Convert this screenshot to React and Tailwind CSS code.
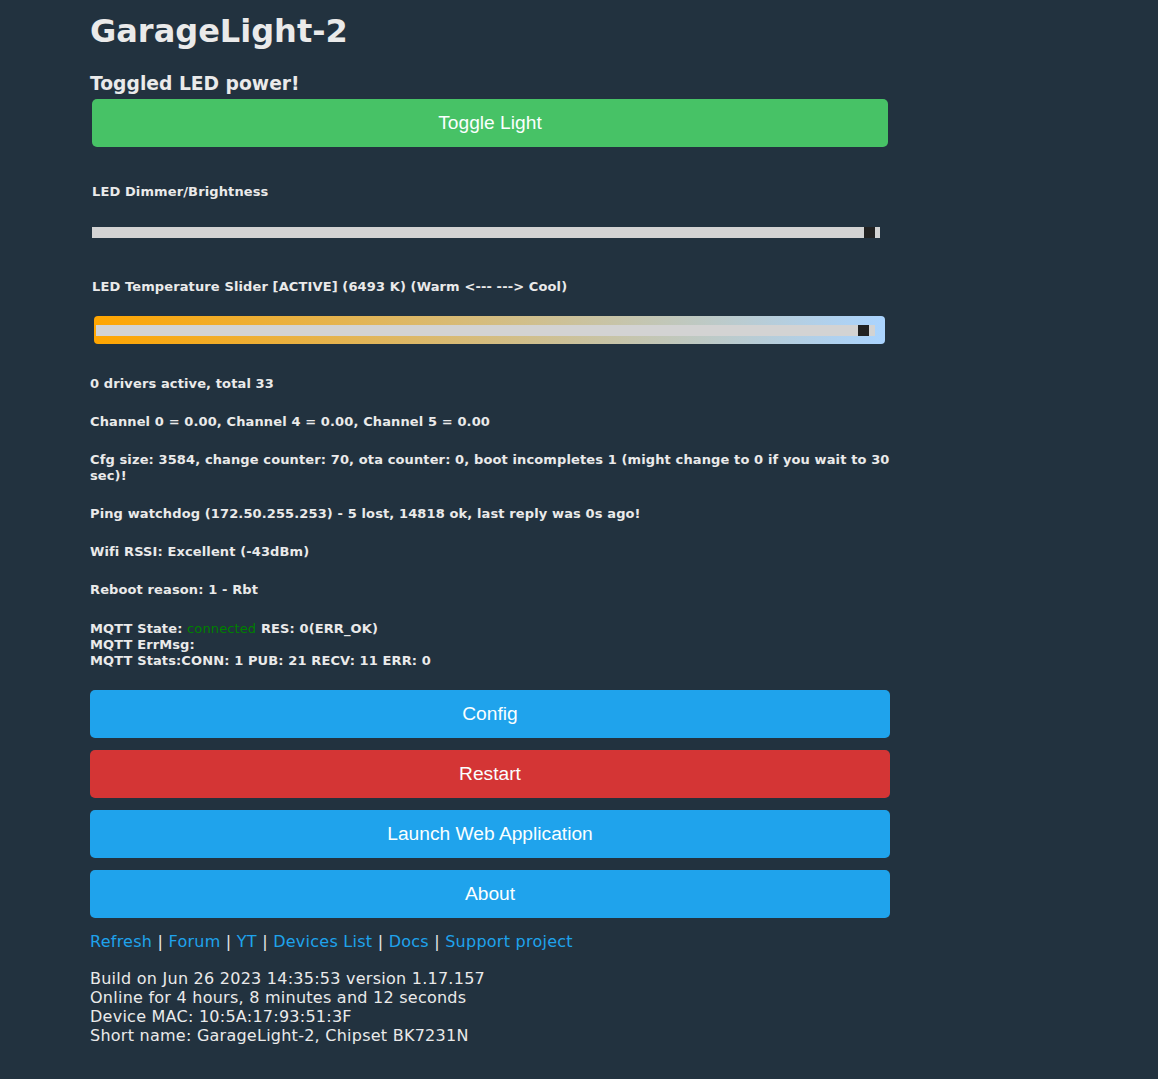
import React from "react";

const bold13 = "text-[13px] font-bold leading-[16px] tracking-[0.12px]";

function Btn({ color, children, className = "" }) {
  return (
    <div
      className={`h-12 rounded-[5px] flex items-center justify-center text-[19.2px] text-[#faffff] font-['Liberation_Sans',Arial,sans-serif] ${color} ${className}`}
    >
      {children}
    </div>
  );
}

export default function App() {
  return (
    <div className="min-h-[1079px] bg-[#22323f] text-[#eaeaea] font-['Verdana','DejaVu_Sans',sans-serif]">
      <div className="w-[800px] ml-[90px] pt-[12px] pb-[20px]">
        <h1 className="text-[32px] font-bold leading-[38px]">GarageLight-2</h1>
        <h3 className="mt-[23px] text-[18.72px] font-bold leading-[22px]">Toggled LED power!</h3>
        <div className="px-[2px] mt-[4px]">
          <Btn color="bg-[#47c266]">Toggle Light</Btn>

          <div className={`${bold13} mt-[37px]`}>LED Dimmer/Brightness</div>
          <div className="mt-[27px] mr-[8px] h-[11px] bg-[#d3d3d3] flex justify-end pr-[5px]">
            <div className="w-[11px] h-full bg-[#222]" />
          </div>

          <div className={`${bold13} mt-[41px]`}>
            LED Temperature Slider [ACTIVE] (6493 K) (Warm &lt;--- ---&gt; Cool)
          </div>
          <div className="mt-[21px] ml-[2px] mr-[3px] h-[28px] rounded-[4px] bg-[linear-gradient(to_right,#ffa500,#aad4ff)] px-[2px] flex items-center">
            <div className="flex-1 mr-[8px] h-[11px] bg-[#d3d3d3] flex justify-end pr-[6px]">
              <div className="w-[11px] h-full bg-[#222]" />
            </div>
          </div>
        </div>

        <div className={`${bold13} mt-[32px]`}>0 drivers active, total 33</div>
        <div className={`${bold13} mt-[22px]`}>
          Channel 0 = 0.00, Channel 4 = 0.00, Channel 5 = 0.00
        </div>
        <div className={`${bold13} mt-[22px]`}>
          Cfg size: 3584, change counter: 70, ota counter: 0, boot incompletes 1 (might change to 0 if you wait to 30 sec)!
        </div>
        <div className={`${bold13} mt-[22px]`}>
          Ping watchdog (172.50.255.253) - 5 lost, 14818 ok, last reply was 0s ago!
        </div>
        <div className={`${bold13} mt-[22px]`}>Wifi RSSI: Excellent (-43dBm)</div>
        <div className={`${bold13} mt-[22px]`}>Reboot reason: 1 - Rbt</div>
        <div className={`${bold13} mt-[23px]`}>
          <div>
            MQTT State: <span className="text-[#008000] font-normal">connected</span> RES: 0(ERR_OK)
          </div>
          <div>MQTT ErrMsg:</div>
          <div>MQTT Stats:CONN: 1 PUB: 21 RECV: 11 ERR: 0</div>
        </div>

        <div className="mt-[21px] flex flex-col gap-[12px]">
          <Btn color="bg-[#1fa3ec]">Config</Btn>
          <Btn color="bg-[#d43535]">Restart</Btn>
          <Btn color="bg-[#1fa3ec]">Launch Web Application</Btn>
          <Btn color="bg-[#1fa3ec]">About</Btn>
        </div>

        <div className="mt-[14px] text-[16px] leading-[19px] tracking-[0.25px] text-[#1fa3ec]">
          <a>Refresh</a> <span className="text-[#eaeaea]">|</span> <a>Forum</a>{" "}
          <span className="text-[#eaeaea]">|</span> <a>YT</a>{" "}
          <span className="text-[#eaeaea]">|</span> <a>Devices List</a>{" "}
          <span className="text-[#eaeaea]">|</span> <a>Docs</a>{" "}
          <span className="text-[#eaeaea]">|</span> <a>Support project</a>
        </div>

        <div className="mt-[18px] text-[16px] leading-[19px] tracking-[0.25px]">
          <div>Build on Jun 26 2023 14:35:53 version 1.17.157</div>
          <div>Online for 4 hours, 8 minutes and 12 seconds</div>
          <div>Device MAC: 10:5A:17:93:51:3F</div>
          <div>Short name: GarageLight-2, Chipset BK7231N</div>
        </div>
      </div>
    </div>
  );
}
